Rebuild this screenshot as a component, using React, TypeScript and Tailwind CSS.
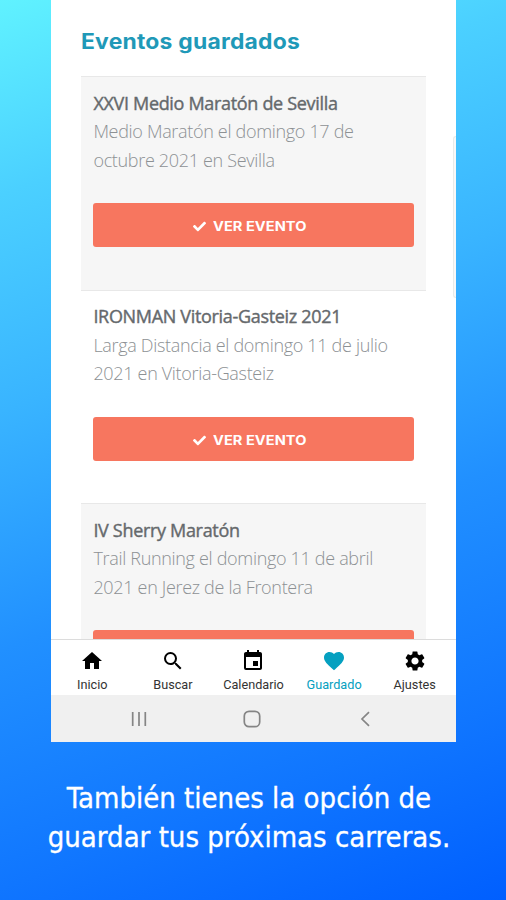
import { clsx } from "clsx";
import type { ReactNode } from "react";
import { FaCheck } from "react-icons/fa";
import {
  MdEvent,
  MdFavorite,
  MdHome,
  MdSearch,
  MdSettings,
} from "react-icons/md";

type SavedEvent = {
  title: string;
  lines: [string, string];
  // the last card runs under the tab bar, only the top of its button shows
  peeking?: boolean;
};

const events: SavedEvent[] = [
  {
    title: "XXVI Medio Maratón de Sevilla",
    lines: ["Medio Maratón el domingo 17 de", "octubre 2021 en Sevilla"],
  },
  {
    title: "IRONMAN Vitoria-Gasteiz 2021",
    lines: ["Larga Distancia el domingo 11 de julio", "2021 en Vitoria-Gasteiz"],
  },
  {
    title: "IV Sherry Maratón",
    lines: ["Trail Running el domingo 11 de abril", "2021 en Jerez de la Frontera"],
    peeking: true,
  },
];

const tabs: { label: string; icon: ReactNode; active?: boolean }[] = [
  { label: "Inicio", icon: <MdHome /> },
  { label: "Buscar", icon: <MdSearch /> },
  { label: "Calendario", icon: <MdEvent /> },
  { label: "Guardado", icon: <MdFavorite />, active: true },
  { label: "Ajustes", icon: <MdSettings /> },
];

function EventCard({ event, shaded }: { event: SavedEvent; shaded: boolean }) {
  return (
    <li
      className={clsx(
        "h-[213.5px] shrink-0 border-t border-[#e8e8e8] px-[12.4px] pt-[11.8px] font-['Open_Sans',sans-serif] text-[18px] leading-[28.5px]",
        shaded ? "bg-[#f6f6f6]" : "bg-white"
      )}
    >
      <h2 className="w-fit whitespace-nowrap font-normal tracking-[-0.32px] text-[#65696c] [-webkit-text-stroke:0.4px_#65696c]">
        {event.title}
      </h2>
      <p className="w-fit whitespace-nowrap font-light tracking-[-0.32px] text-[#8d9194]">
        {event.lines[0]}
        <br />
        {event.lines[1]}
      </p>
      <button className="mt-[28.8px] flex h-11 w-[321px] items-center justify-center gap-[7px] rounded-[3px] bg-[#f7765f] pr-[9px] pt-[3px] font-['Inter',sans-serif] text-[13px] font-bold text-white">
        {!event.peeking && (
          <>
            <FaCheck className="size-[13px]" />
            <span className="w-[93px] whitespace-nowrap text-left">
              <span className="inline-block origin-left scale-x-[1.12] tracking-[0.05px]">
                VER EVENTO
              </span>
            </span>
          </>
        )}
      </button>
    </li>
  );
}

function TabBar() {
  return (
    <nav className="grid h-[56px] shrink-0 grid-cols-5 border-t border-[#dcdcdc] bg-white pl-px pr-px font-['Roboto',sans-serif]">
      {tabs.map(({ label, icon, active }) => (
        <div
          key={label}
          className={clsx(
            "flex flex-col items-center pt-[9px]",
            active ? "text-[#05a0c0]" : "text-black"
          )}
        >
          <span className="text-[24px]">{icon}</span>
          <span
            className={clsx(
              "mt-[4px] text-[12.7px] leading-4",
              !active && "text-[#333]"
            )}
          >
            {label}
          </span>
        </div>
      ))}
    </nav>
  );
}

function SystemBar() {
  return (
    <div className="flex h-[47px] shrink-0 items-center bg-[#f0f0f0] pl-[80px] text-[#858585]">
      <svg width="16" height="16" fill="none" stroke="currentColor" strokeWidth="1.7">
        <path d="M1.7 1v14M8 1v14M14.3 1v14" />
      </svg>
      <svg width="18" height="18" className="ml-[96px]" fill="none" stroke="currentColor" strokeWidth="1.7">
        <rect x="1.3" y="1.3" width="15.4" height="15.4" rx="4.8" />
      </svg>
      <svg width="10" height="16" className="ml-[99px]" fill="none" stroke="currentColor" strokeWidth="1.7">
        <path d="M9 1.2 2 8l7 6.8" />
      </svg>
    </div>
  );
}

export default function App() {
  return (
    <div className="flex h-[900px] w-[506px] flex-col overflow-hidden bg-[linear-gradient(160deg,#60f2ff_0%,#4bd0ff_18%,#39b4ff_38%,#2190ff_60%,#1076ff_82%,#005fff_100%)]">
      <main className="relative ml-[51px] flex h-[742px] w-[405px] shrink-0 flex-col bg-white">
        <section className="flex min-h-0 flex-1 flex-col overflow-hidden px-[30px]">
          <h1 className="mt-[26px] w-fit shrink-0 origin-left scale-x-[1.09] whitespace-nowrap font-['Inter',sans-serif] text-[21px] font-bold leading-8 tracking-[0.2px] text-[#1f99b8]">
            Eventos guardados
          </h1>
          <ul className="mt-[18px] flex w-[345px] flex-col">
            {events.map((event, i) => (
              <EventCard key={event.title} event={event} shaded={i % 2 === 0} />
            ))}
          </ul>
        </section>
        <TabBar />
        <SystemBar />
        {/* edge panel handle */}
        <span className="absolute right-0 top-[136px] h-[162px] w-[3px] rounded-l-[4px] border border-r-0 border-[#e8ebea] bg-[#f8f8f8]" />
      </main>
      <p className="mt-[37px] whitespace-nowrap pr-[8px] text-center font-['DejaVu_Sans_Condensed','DejaVu_Sans',sans-serif] text-[29px] leading-[39px] text-white [-webkit-text-stroke:0.3px_white]">
        También tienes la opción de
        <br />
        guardar tus próximas carreras.
      </p>
    </div>
  );
}
